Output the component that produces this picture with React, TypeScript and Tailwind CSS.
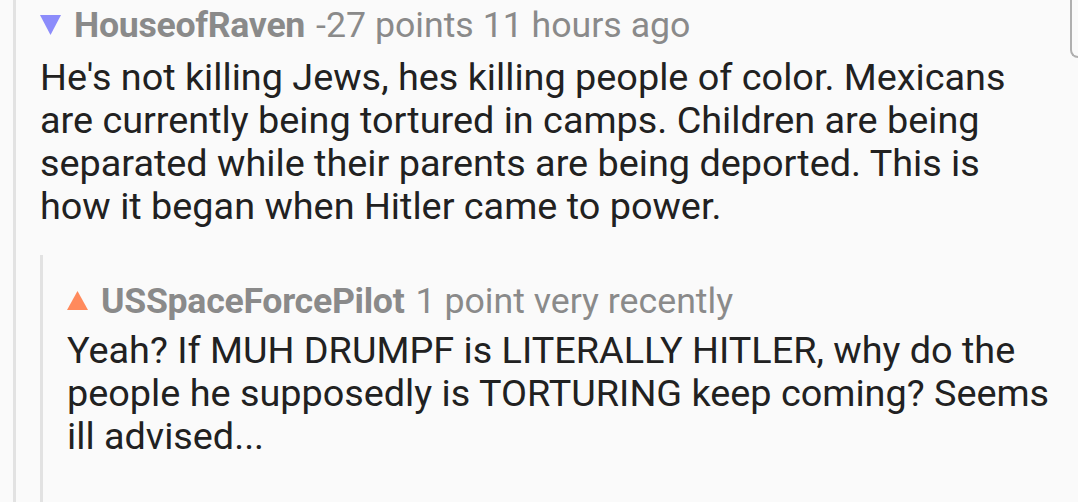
import React from "react";

export default function App() {
  return (
    <div className="relative w-[1078px] h-[502px] overflow-hidden bg-[#fafafa]" style={{ fontFamily: "Roboto, 'Noto Sans', sans-serif" }}>
      <div className="absolute right-0 top-[-20px] w-[8px] h-[78px] border-l-2 border-b-2 border-[#b0b0b0] rounded-bl-[10px]" />
      <div className="ml-[13px] h-full border-l-[3px] border-[#e2e2e2] pl-[24px] pr-[24px]">
        <div className="flex items-center h-[50px] mb-[6px] pt-[1px] text-[35.7px] text-[#8a8a8a]">
          <svg width="21" height="20" viewBox="0 0 21 20" className="mr-[13px] mt-[-1px] shrink-0">
            <polygon points="0,0 21,0 10.5,20" fill="#8c8cfb" />
          </svg>
          <span className="font-bold tracking-[-0.3px]">HouseofRaven</span>
          <span className="ml-[11px]">-27 points 11 hours ago</span>
        </div>
        <div className="text-[37.8px] leading-[43px] text-[#212121]">
          He's not killing Jews, hes killing people of color. Mexicans are currently being tortured in camps. Children are being separated while their parents are being deported. This is how it began when Hitler came to power.
        </div>
        <div className="mt-[27px] border-l-[3px] border-[#e2e2e2] pl-[24px] h-[260px] pt-[21px]">
          <div className="flex items-center h-[50px] mb-[3px] pt-[1px] text-[35.7px] text-[#8a8a8a]">
            <svg width="21" height="19" viewBox="0 0 21 19" className="mr-[13px] mt-[-2px] shrink-0">
              <polygon points="10.5,0 21,19 0,19" fill="#ff8a5c" />
            </svg>
            <span className="font-bold tracking-[-0.3px]">USSpaceForcePilot</span>
            <span className="ml-[11px]">1 point very recently</span>
          </div>
          <div className="text-[37.8px] leading-[43px] text-[#212121]">
            Yeah? If MUH DRUMPF is LITERALLY HITLER, why do the people he supposedly is TORTURING keep coming? Seems ill advised...
          </div>
        </div>
      </div>
    </div>
  );
}
